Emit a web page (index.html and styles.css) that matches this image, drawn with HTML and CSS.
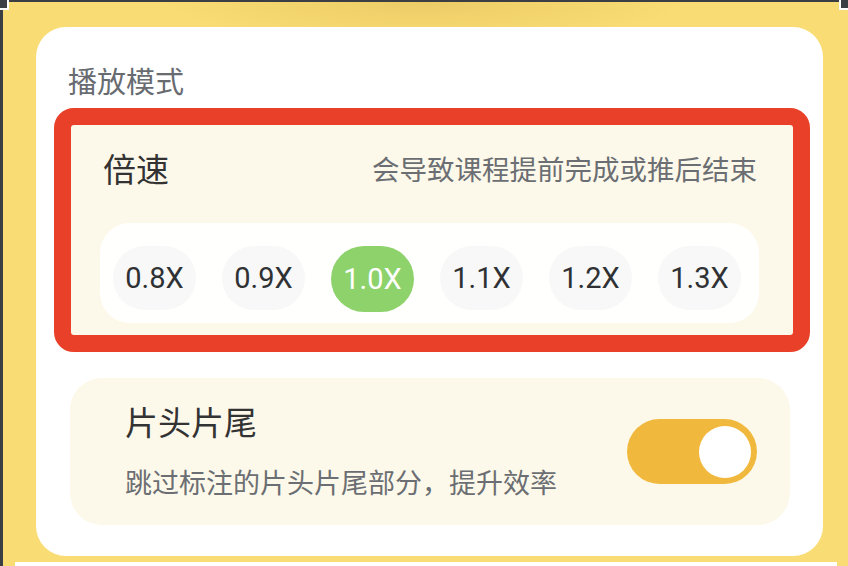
FILE: index.html
```html
<!DOCTYPE html>
<html lang="zh-CN">
<head>
<meta charset="utf-8">
<title>播放模式</title>
<link rel="stylesheet" href="styles.css">
</head>
<body>
<div class="frame">
  <span class="corner corner-left"></span>
  <span class="corner corner-right"></span>
  <div class="card">
    <div class="section-title">播放模式</div>
    <div class="speed-box">
      <div class="speed-head">
        <span class="speed-label">倍速</span>
        <span class="speed-hint">会导致课程提前完成或推后结束</span>
      </div>
      <div class="speed-options">
        <span class="pill">0.8X</span>
        <span class="pill">0.9X</span>
        <span class="pill pill-active">1.0X</span>
        <span class="pill">1.1X</span>
        <span class="pill">1.2X</span>
        <span class="pill">1.3X</span>
      </div>
    </div>
    <div class="skip-box">
      <div class="skip-text">
        <div class="skip-label">片头片尾</div>
        <div class="skip-desc">跳过标注的片头片尾部分，提升效率</div>
      </div>
      <div class="toggle"><span class="knob"></span></div>
    </div>
  </div>
  <div class="bottom-strip"></div>
</div>
</body>
</html>
```
FILE: styles.css
```css
html, body {
  margin: 0;
  padding: 0;
}
body {
  width: 848px;
  height: 566px;
  overflow: hidden;
  font-family: "Noto Sans CJK SC", "Noto Sans", sans-serif;
  background: #f9dc74;
}
.frame {
  position: relative;
  box-sizing: border-box;
  height: 566px;
  border-top: 2px solid #3b3e43;
  border-left: 3px solid #3b3e43;
  background:
    radial-gradient(ellipse 260px 40px at 420px 0px, rgba(225, 190, 90, 0.55), rgba(249, 220, 116, 0) 100%),
    #f9dc74;
  padding: 25px 25px 0 33px;
}
.corner {
  position: absolute;
  top: -2px;
  width: 7px;
  height: 8px;
  background: #3b3e43;
  border: 0 solid #ffffff;
}
.corner-left {
  left: -3px;
  border-right-width: 2px;
  border-bottom-width: 2px;
}
.corner-right {
  right: 0;
  border-left-width: 2px;
  border-bottom-width: 2px;
}
.bottom-strip {
  position: absolute;
  left: 12px;
  right: 11px;
  bottom: 0;
  height: 4px;
  background: #ffffff;
}
.card {
  height: 529px;
  background: #ffffff;
  border-radius: 30px;
  box-sizing: border-box;
  padding: 36px 0 0 0;
}
.section-title {
  margin-left: 32px;
  font-size: 29px;
  line-height: 34px;
  color: #686b70;
  height: 45px;
}
.speed-box {
  margin-left: 18px;
  width: 756px;
  box-sizing: border-box;
  height: 244px;
  border: 17px solid #e94129;
  border-radius: 20px;
  background: #fdf9ea;
  padding: 20px 36px 0 32px;
}
.speed-head {
  display: flex;
  justify-content: space-between;
  align-items: center;
  height: 46px;
}
.speed-label {
  font-size: 33px;
  color: #333333;
}
.speed-hint {
  font-size: 27.5px;
  color: #6b6e72;
}
.speed-options {
  margin-top: 32px;
  margin-left: -3px;
  margin-right: -2px;
  height: 100px;
  box-sizing: border-box;
  background: #fffffd;
  border-radius: 30px;
  display: flex;
  align-items: flex-start;
  gap: 26px;
  padding: 23px 0 0 13px;
}
.pill {
  width: 83px;
  height: 64px;
  border-radius: 32px;
  background: #f7f8f7;
  display: flex;
  align-items: center;
  justify-content: center;
  font-family: Roboto, "Noto Sans", sans-serif;
  font-size: 29px;
  color: #2f3134;
}
.pill-active {
  background: #8ed26c;
  color: #ffffff;
  height: 66px;
  border-radius: 33px;
}
.skip-box {
  margin: 26px 33px 0 34px;
  height: 147px;
  box-sizing: border-box;
  background: #fdf9ea;
  border-radius: 32px;
  display: flex;
  align-items: center;
  justify-content: space-between;
  padding: 0 33px 0 55px;
}
.skip-label {
  font-size: 33px;
  line-height: 40px;
  color: #333333;
  margin-top: -4px;
}
.skip-desc {
  margin-top: 24px;
  font-size: 27px;
  line-height: 34px;
  color: #6b6e72;
}
.toggle {
  width: 130px;
  height: 65px;
  border-radius: 33px;
  background: #f0b93e;
  display: flex;
  align-items: center;
  justify-content: flex-end;
  padding-right: 6px;
  box-sizing: border-box;
}
.knob {
  width: 52px;
  height: 52px;
  border-radius: 50%;
  background: #ffffff;
}
```
